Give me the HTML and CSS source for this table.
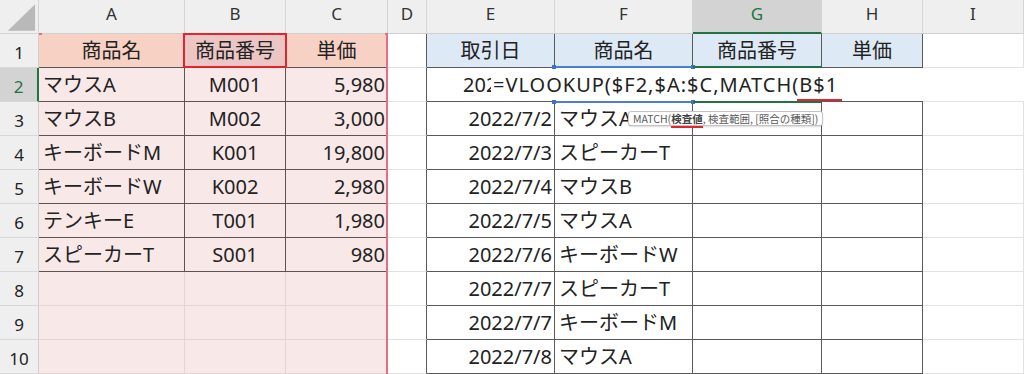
FILE: index.html
```html
<!DOCTYPE html>
<html lang="ja">
<head>
<meta charset="utf-8">
<title>VLOOKUP MATCH</title>
<link rel="stylesheet" href="styles.css">
</head>
<body>
<div class="sheet">
  <div class="c corner"><svg width="39" height="33" viewBox="0 0 39 33"><polygon points="8,31 36,31 36,4" fill="#b9b9b9"/></svg></div>
  <div class="c ch">A</div>
  <div class="c ch">B</div>
  <div class="c ch">C</div>
  <div class="c ch">D</div>
  <div class="c ch">E</div>
  <div class="c ch">F</div>
  <div class="c ch sel-col">G</div>
  <div class="c ch">H</div>
  <div class="c ch">I</div>

  <div class="c rh">1</div>
  <div class="c sh tp ctr">商品名</div>
  <div class="c shd tp ctr">商品番号</div>
  <div class="c sh tp ctr">単価</div>
  <div class="c dr"></div>
  <div class="c bl tb ctr">取引日</div>
  <div class="c bl tb ctr">商品名</div>
  <div class="c bl tb ctr">商品番号</div>
  <div class="c bl tb ctr">単価</div>
  <div class="c"></div>

  <div class="c rh sel-row">2</div>
  <div class="c pk tp">マウスA</div>
  <div class="c pk tp ctr">M001</div>
  <div class="c pk tp rt">5,980</div>
  <div class="c dr"></div>
  <div class="c tb e2"><span class="clip">2022/7/1</span></div>
  <div class="c tb"></div>
  <div class="c tb"></div>
  <div class="c tb"></div>
  <div class="c"></div>

  <div class="c rh">3</div>
  <div class="c pk tp">マウスB</div>
  <div class="c pk tp ctr">M002</div>
  <div class="c pk tp rt">3,000</div>
  <div class="c dr"></div>
  <div class="c tb rt">2022/7/2</div>
  <div class="c tb">マウスA</div>
  <div class="c tb"></div>
  <div class="c tb"></div>
  <div class="c"></div>

  <div class="c rh">4</div>
  <div class="c pk tp">キーボードM</div>
  <div class="c pk tp ctr">K001</div>
  <div class="c pk tp rt">19,800</div>
  <div class="c dr"></div>
  <div class="c tb rt">2022/7/3</div>
  <div class="c tb">スピーカーT</div>
  <div class="c tb"></div>
  <div class="c tb"></div>
  <div class="c"></div>

  <div class="c rh">5</div>
  <div class="c pk tp">キーボードW</div>
  <div class="c pk tp ctr">K002</div>
  <div class="c pk tp rt">2,980</div>
  <div class="c dr"></div>
  <div class="c tb rt">2022/7/4</div>
  <div class="c tb">マウスB</div>
  <div class="c tb"></div>
  <div class="c tb"></div>
  <div class="c"></div>

  <div class="c rh">6</div>
  <div class="c pk tp">テンキーE</div>
  <div class="c pk tp ctr">T001</div>
  <div class="c pk tp rt">1,980</div>
  <div class="c dr"></div>
  <div class="c tb rt">2022/7/5</div>
  <div class="c tb">マウスA</div>
  <div class="c tb"></div>
  <div class="c tb"></div>
  <div class="c"></div>

  <div class="c rh">7</div>
  <div class="c pk tp">スピーカーT</div>
  <div class="c pk tp ctr">S001</div>
  <div class="c pk tp rt">980</div>
  <div class="c dr"></div>
  <div class="c tb rt">2022/7/6</div>
  <div class="c tb">キーボードW</div>
  <div class="c tb"></div>
  <div class="c tb"></div>
  <div class="c"></div>

  <div class="c rh">8</div>
  <div class="c pk"></div>
  <div class="c pk"></div>
  <div class="c pk"></div>
  <div class="c dr"></div>
  <div class="c tb rt">2022/7/7</div>
  <div class="c tb">スピーカーT</div>
  <div class="c tb"></div>
  <div class="c tb"></div>
  <div class="c"></div>

  <div class="c rh">9</div>
  <div class="c pk"></div>
  <div class="c pk"></div>
  <div class="c pk"></div>
  <div class="c dr"></div>
  <div class="c tb rt">2022/7/7</div>
  <div class="c tb">キーボードM</div>
  <div class="c tb"></div>
  <div class="c tb"></div>
  <div class="c"></div>

  <div class="c rh">10</div>
  <div class="c pk"></div>
  <div class="c pk"></div>
  <div class="c pk"></div>
  <div class="c dr"></div>
  <div class="c tb rt">2022/7/8</div>
  <div class="c tb">マウスA</div>
  <div class="c tb"></div>
  <div class="c tb"></div>
  <div class="c"></div>

  <div class="ref-red"><i class="dot dot-l"></i><i class="dot dot-r"></i></div>
  <div class="note-box"></div>
  <div class="editor">=VLOOKUP($F2,$A:$C,MATCH(<span class="mark">B$1</span></div>
  <div class="ref-blue"><i class="bd tl"></i><i class="bd tr"></i><i class="bd bl2"></i><i class="bd br"></i></div>
  <div class="active"></div>
  <div class="tip">MATCH(<b class="mark">検査値</b>, 検査範囲, [照合の種類])</div>
</div>
</body>
</html>
```

FILE: styles.css
```css
html, body {
  margin: 0;
  padding: 0;
  background: #ffffff;
  overflow: hidden;
}

.sheet {
  position: relative;
  display: grid;
  grid-template-columns: 39px 146px 101px 102px 39px 128px 138px 129px 101px 1fr;
  grid-template-rows: repeat(11, 34px);
  width: 1024px;
  height: 374px;
  font-family: "Noto Sans", "Noto Sans CJK JP", sans-serif;
  font-size: 20px;
  color: #222222;
  overflow: hidden;
}

.c {
  box-sizing: border-box;
  border-right: 1px solid #e2e2e2;
  border-bottom: 1px solid #e2e2e2;
  display: flex;
  align-items: center;
  padding: 0 4px;
  white-space: nowrap;
  overflow: hidden;
  line-height: 1;
}

.ctr { justify-content: center; }
.rt { justify-content: flex-end; padding-right: 2px; }

.corner {
  background: #efefef;
  border-color: #d4d4d4;
  padding: 0;
  align-items: flex-start;
}

.ch {
  background: #efefef;
  border-right-color: #d4d4d4;
  border-bottom-color: #cfcfcf;
  justify-content: center;
  font-size: 17px;
  color: #333333;
  padding-bottom: 7px;
}

.rh {
  background: #efefef;
  border-right-color: #cfcfcf;
  border-bottom-color: #d8d8d8;
  justify-content: center;
  font-size: 17px;
  color: #222222;
  padding: 3px 0 0;
}

.sel-col {
  background: #d3d3d3;
  color: #217346;
  border-bottom: 2px solid #217346;
  padding-bottom: 6px;
}

.sel-row {
  background: #d3d3d3;
  color: #217346;
  border-right: 2px solid #217346;
}

.sh { background: #f7d1c4; }
.shd { background: #ecc6c5; }
.pk { background: #f9e8e8; border-color: #e6d4d4; }

.tp {
  border-right-color: #5d5353;
  border-bottom-color: #5d5353;
}

.bl { background: #dde9f5; }

.tb {
  border-right-color: #5a5a5a;
  border-bottom-color: #5a5a5a;
}

.dr { border-right-color: #5a5a5a; }

/* E2 value, partly hidden by the in-cell editor */
.e2 { padding-left: 36px; }
.clip {
  display: inline-block;
  width: 28px;
  overflow: hidden;
  white-space: nowrap;
}

/* reference highlight for $A:$C */
.ref-red {
  position: absolute;
  left: 39px;
  top: 33px;
  width: 349px;
  bottom: 0;
  box-sizing: border-box;
  border-right: 2px solid #e3707c;
}
.dot {
  position: absolute;
  top: 0;
  width: 3px;
  height: 2px;
  background: #e3707c;
}
.dot-l { left: 0; }
.dot-r { right: -2px; }

/* annotation box around B1 */
.note-box {
  position: absolute;
  left: 183px;
  top: 33px;
  width: 104px;
  height: 35px;
  box-sizing: border-box;
  border: 2px solid #e2242d;
}

/* in-cell formula editor */
.editor {
  position: absolute;
  left: 491px;
  top: 68px;
  width: 533px;
  height: 33px;
  background: #ffffff;
  box-sizing: border-box;
  padding-left: 2px;
  display: flex;
  align-items: center;
  line-height: 1;
  white-space: nowrap;
  letter-spacing: 1px;
  color: #222222;
}

.mark { position: relative; }
.editor .mark::after {
  content: "";
  position: absolute;
  left: -2px;
  right: -4px;
  bottom: -6px;
  height: 2px;
  background: #e2242d;
}

/* reference highlight for $F2 */
.ref-blue {
  position: absolute;
  left: 554px;
  top: 66px;
  width: 139px;
  height: 37px;
  box-sizing: border-box;
  border-top: 2px solid #4a7fd0;
  border-bottom: 2px solid #4a7fd0;
}
.bd {
  position: absolute;
  width: 4px;
  height: 4px;
  background: #3d74c9;
}
.tl { left: -2px; top: -3px; }
.tr { right: -2px; top: -3px; }
.bl2 { left: -2px; bottom: -3px; }
.br { right: -2px; bottom: -3px; }

/* active cell G2 */
.active {
  position: absolute;
  left: 693px;
  top: 66px;
  width: 129px;
  height: 37px;
  box-sizing: border-box;
  border-top: 2px solid #217346;
  border-bottom: 2px solid #217346;
}

/* function tooltip */
.tip {
  position: absolute;
  left: 628px;
  top: 111px;
  height: 15px;
  box-sizing: border-box;
  padding: 0 4px;
  background: #ffffff;
  border: 1px solid #c4c4c4;
  border-radius: 3px;
  box-shadow: 0 1px 2px rgba(0, 0, 0, 0.15);
  font-family: "Noto Sans CJK JP", sans-serif;
  font-size: 10.5px;
  line-height: 13px;
  color: #5a5a5a;
  white-space: nowrap;
}
.tip b { font-weight: 700; color: #444444; }
.tip .mark::after {
  content: "";
  position: absolute;
  left: 0;
  right: 0;
  bottom: -2px;
  height: 2px;
  background: #e2242d;
}
```
